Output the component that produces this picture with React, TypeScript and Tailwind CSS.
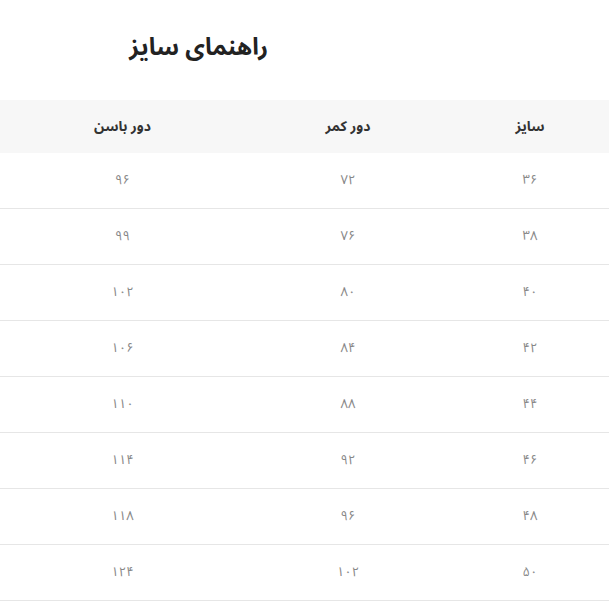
const rows = [
  ["۳۶", "۷۲", "۹۶"],
  ["۳۸", "۷۶", "۹۹"],
  ["۴۰", "۸۰", "۱۰۲"],
  ["۴۲", "۸۴", "۱۰۶"],
  ["۴۴", "۸۸", "۱۱۰"],
  ["۴۶", "۹۲", "۱۱۴"],
  ["۴۸", "۹۶", "۱۱۸"],
  ["۵۰", "۱۰۲", "۱۲۴"],
]

export default function App() {
  return (
    <div
      dir="rtl"
      className="w-[609px] h-[609px] bg-white overflow-hidden font-['Noto_Sans_Arabic','DejaVu_Sans',sans-serif]"
    >
      {/* Title */}
      <div className="pt-[30px] pr-[341px] h-[100px]">
        <h1 className="text-[24px] leading-[36px] font-bold text-[#222]">راهنمای سایز</h1>
      </div>

      {/* Header */}
      <div className="grid grid-cols-[158px_206px_245px] h-[53px] bg-[#f7f7f7] items-center text-center text-[14px] font-bold text-[#333]">
        <div>سایز</div>
        <div>دور کمر</div>
        <div>دور باسن</div>
      </div>

      {/* Rows */}
      {rows.map((r, i) => (
        <div
          key={i}
          className="grid grid-cols-[158px_206px_245px] h-[56px] border-b border-[#e6e6e6] items-center text-center text-[13px] text-[#888]"
        >
          {r.map((c, j) => (
            <div key={j}>{c}</div>
          ))}
        </div>
      ))}
    </div>
  )
}
